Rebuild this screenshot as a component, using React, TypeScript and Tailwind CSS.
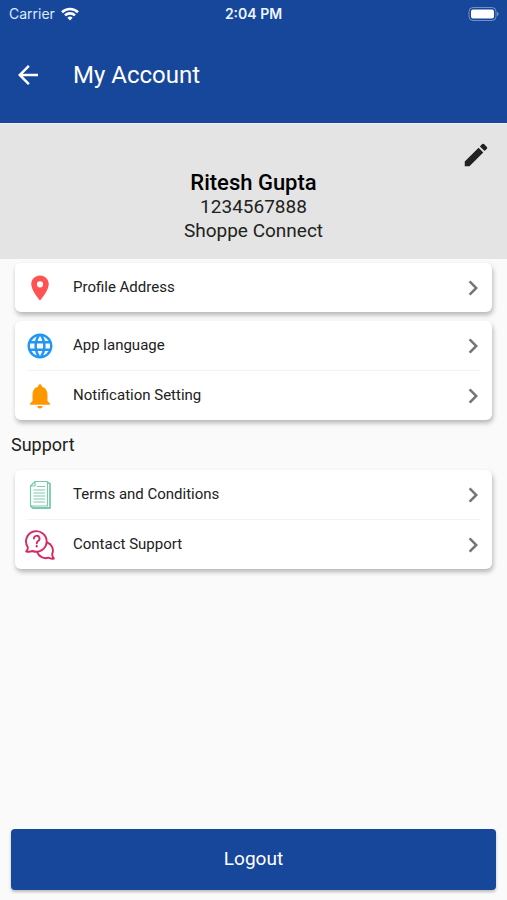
import type { ReactNode } from 'react';
import {
  MdArrowBack,
  MdChevronRight,
  MdEdit,
  MdLanguage,
  MdLocationOn,
  MdNotifications,
} from 'react-icons/md';

interface RowProps {
  icon: ReactNode;
  label: string;
}

function StatusBar() {
  return (
    <div className="grid h-7 grid-cols-3 items-center px-2 font-['Inter',sans-serif] text-sm">
      <div className="flex items-center gap-1.5 pl-px text-blue-100">
        <span>Carrier</span>
        <svg viewBox="0 0 18 14" className="h-3.5 w-[18px]" fill="none" stroke="white" strokeWidth="2.6">
          <path d="M1 5.2a11.5 11.5 0 0 1 16 0" />
          <path d="M4 8.4a7.2 7.2 0 0 1 10 0" />
          <path d="M9 13.6l-2.6-2.8a3.8 3.8 0 0 1 5.2 0z" fill="white" stroke="none" />
        </svg>
      </div>
      <div className="text-center font-semibold text-blue-50">2:04 PM</div>
      <svg viewBox="0 0 31 14" className="h-3.5 w-[31px] justify-self-end">
        <rect x="1" y="0.5" width="27" height="13" rx="4" fill="none" stroke="white" strokeOpacity="0.4" />
        <rect x="3" y="2.5" width="23" height="9" rx="2" fill="white" />
        <path d="M29 5v4c1-.3 1.6-1.1 1.6-2S30 5.3 29 5z" fill="white" fillOpacity="0.4" />
      </svg>
    </div>
  );
}

function DocumentIcon() {
  return (
    <svg viewBox="0 0 24 30" className="h-[30px] w-6" fill="none" stroke="#7cc9b0" strokeWidth="1.2" strokeLinejoin="round">
      <path d="M7 1.5h12.5V26h-17V6z" />
      <path d="M7 1.500V6H2.500" />
      <path d="M19.500 2.500l2.500 1v24.500H5L2.500 26" strokeWidth="1.8" />
      <path d="M9 6.5h8M5.500 10h11.500M5.500 13h11.500M5.500 16h11.500M5.500 19h11.500M5.500 22h11.500" />
    </svg>
  );
}

function ChatIcon() {
  return (
    <svg viewBox="0 0 30 30" className="size-[30px]" fill="none" stroke="#d32b63" strokeWidth="1.9" strokeLinecap="round" strokeLinejoin="round">
      <path d="M1.200 21.500c1.300-1.300 1.800-2.600 1.600-4.300A10.300 10.300 0 1 1 7.500 21c-2 .8-4.200.9-6.300.5z" />
      <path d="M22.200 12.500a8.600 8.600 0 0 1 5 11.500c-.1 1.700.4 3.200 1.600 4.500-2 .4-3.800.1-5.400-.8a8.800 8.800 0 0 1-11.200-5.700" />
      <path d="M8.900 8.600a2.800 2.800 0 1 1 4.200 2.400c-1 .6-1.400 1.200-1.400 2.400" />
      <path d="M11.700 16.200v.2" strokeWidth="2.2" />
    </svg>
  );
}

function Card({ children }: { children: ReactNode }) {
  return (
    <nav className="rounded-md bg-white shadow-[1px_3px_5px_rgba(0,0,0,0.28)]">
      {children}
    </nav>
  );
}

function Row({ icon, label }: RowProps) {
  return (
    <a href="#" className="flex h-[49px] items-center pr-1 pl-2.5">
      <span className="flex w-[30px] justify-center">{icon}</span>
      <span className="ml-[18px] flex-1">{label}</span>
      <MdChevronRight className="size-[30px] text-[#757575]" />
    </a>
  );
}

function Divider() {
  return <div className="mx-3 h-px bg-[#f3f3f3]" />;
}

export default function App() {
  return (
    <div className="flex min-h-screen flex-col bg-[#fafafa] font-['Roboto',sans-serif] text-[15px] text-[#212121]">
      <header className="bg-[#17479b] text-white">
        <StatusBar />
        <div className="flex h-[95px] items-center px-[13px] pb-0.5">
          <button type="button" aria-label="Back" className="mr-[30px]">
            <MdArrowBack className="size-[30px]" />
          </button>
          <h1 className="text-2xl">My Account</h1>
        </div>
      </header>

      <section className="border-t border-[#eef0f4] bg-[#e4e4e4] px-4 py-4">
        <div className="flex justify-end pb-px">
          <button type="button" aria-label="Edit profile">
            <MdEdit className="size-[30px]" />
          </button>
        </div>
        <div className="text-center text-[19px] leading-6">
          <h2 className="text-[22px] font-medium text-black">Ritesh Gupta</h2>
          <p>1234567888</p>
          <p>Shoppe Connect</p>
        </div>
      </section>

      <main className="px-[15px] pt-1">
        <Card>
          <Row icon={<MdLocationOn className="size-[30px] text-[#ff5252]" />} label="Profile Address" />
        </Card>
        <div className="mt-[9px]">
          <Card>
            <Row icon={<MdLanguage className="size-[30px] text-[#2196f3]" />} label="App language" />
            <Divider />
            <Row icon={<MdNotifications className="size-[30px] text-[#ff9800]" />} label="Notification Setting" />
          </Card>
        </div>
        <h3 className="-ml-1 py-3 text-lg leading-[26px]">Support</h3>
        <Card>
          <Row icon={<DocumentIcon />} label="Terms and Conditions" />
          <Divider />
          <Row icon={<ChatIcon />} label="Contact Support" />
        </Card>
      </main>

      <footer className="mt-auto px-[11px] pt-6 pb-2.5">
        <button type="button" className="h-[61px] w-full rounded-sm bg-[#17479b] text-[19px] text-white shadow-[0_2px_3px_rgba(0,0,0,0.25)]">
          Logout
        </button>
      </footer>
    </div>
  );
}
